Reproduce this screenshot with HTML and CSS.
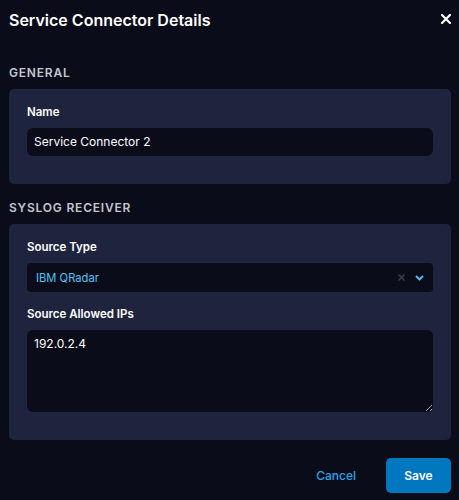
FILE: index.html
```html
<!DOCTYPE html>
<html>
<head>
<meta charset="utf-8">
<link rel="stylesheet" href="styles.css">
</head>
<body>
<div class="dialog">
  <div class="header">
    <h1 class="title">Service Connector Details</h1>
    <button class="close" aria-label="Close">
      <svg width="10" height="10" viewBox="0 0 10 10"><path d="M1 1 L9 9 M9 1 L1 9" stroke="#ffffff" stroke-width="2.2" stroke-linecap="square"/></svg>
    </button>
  </div>

  <div class="section-title section-title--first">GENERAL</div>
  <div class="card">
    <label class="label">Name</label>
    <div class="input">Service Connector 2</div>
  </div>

  <div class="section-title">SYSLOG RECEIVER</div>
  <div class="card">
    <label class="label">Source Type</label>
    <div class="select">
      <span class="select-value">IBM QRadar</span>
      <span class="select-icons">
        <svg class="clear" width="7" height="7" viewBox="0 0 7 7"><path d="M0.5 0.5 L6.5 6.5 M6.5 0.5 L0.5 6.5" stroke="#3b404c" stroke-width="1.4"/></svg>
        <svg class="chevron" width="9" height="6" viewBox="0 0 9 6"><path d="M1 1 L4.5 4.5 L8 1" fill="none" stroke="#4fc3f7" stroke-width="1.8"/></svg>
      </span>
    </div>
    <label class="label label--spaced">Source Allowed IPs</label>
    <textarea class="textarea">192.0.2.4</textarea>
  </div>

  <div class="footer">
    <button class="btn-cancel">Cancel</button>
    <button class="btn-save">Save</button>
  </div>
</div>
</body>
</html>
```

FILE: styles.css
```css
html, body {
  margin: 0;
  padding: 0;
  background: #0a0d19;
}

body {
  font-family: Inter, "Noto Sans", sans-serif;
  color: #ffffff;
  width: 459px;
  height: 500px;
  overflow: hidden;
}

.dialog {
  padding: 0 8px 0 9px;
}

.header {
  display: flex;
  justify-content: space-between;
  align-items: flex-start;
  padding-top: 9px;
}

.title {
  margin: 0;
  font-size: 16px;
  font-weight: 600;
  line-height: 22px;
  color: #ffffff;
}

.close {
  background: none;
  border: none;
  padding: 0;
  margin: 5px 0 0 0;
  width: 10px;
  height: 10px;
  display: flex;
}

.section-title {
  font-size: 12px;
  font-weight: 600;
  letter-spacing: 0.8px;
  color: #c3c7cf;
  line-height: 15px;
  margin: 16px 0 9px 0;
}

.section-title--first {
  margin-top: 34px;
}

.card {
  background: #1e243e;
  border-radius: 5px;
  padding: 16px 18px 28px 18px;
  display: flex;
  flex-direction: column;
}

.label {
  font-size: 11.5px;
  font-weight: 600;
  line-height: 15px;
  color: #ffffff;
  margin-bottom: 8px;
}

.label--spaced {
  margin-top: 15px;
}

.input {
  background: #0a0d19;
  border-radius: 6px;
  height: 28px;
  line-height: 28px;
  padding: 0 7px;
  font-size: 12px;
  color: #ffffff;
}

.select {
  background: #0a0d19;
  border-radius: 4px;
  height: 29px;
  display: flex;
  align-items: center;
  justify-content: space-between;
  padding: 0 9px;
  font-size: 11.2px;
}

.select-value {
  color: #4fc3f7;
}

.select-icons {
  display: flex;
  align-items: center;
  gap: 10px;
}

.textarea {
  background: #0a0d19;
  border: none;
  border-radius: 6px;
  height: 82px;
  box-sizing: border-box;
  padding: 6px 7px;
  font-family: Inter, "Noto Sans", sans-serif;
  font-size: 12px;
  color: #ffffff;
  resize: vertical;
  outline: none;
  margin: 0;
  color-scheme: dark;
}

.footer {
  display: flex;
  justify-content: flex-end;
  align-items: center;
  margin-top: 18px;
  gap: 15px;
}

.btn-cancel {
  background: none;
  border: none;
  font-family: Inter, "Noto Sans", sans-serif;
  font-size: 12px;
  font-weight: 500;
  color: #27a4e6;
  padding: 0 15px;
  height: 35px;
}

.btn-save {
  background: #0077bf;
  border: none;
  border-radius: 5px;
  width: 65px;
  height: 35px;
  font-family: Inter, "Noto Sans", sans-serif;
  font-size: 12px;
  font-weight: 600;
  color: #ffffff;
}
```
